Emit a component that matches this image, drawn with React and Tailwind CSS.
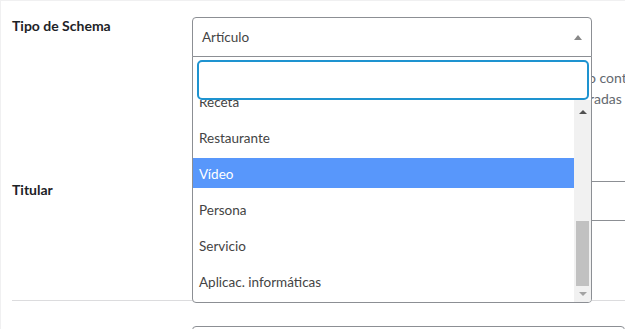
import React from 'react';

const options = ['Receta', 'Restaurante', 'Vídeo', 'Persona', 'Servicio', 'Aplicac. informáticas'];

export default function App() {
  const active = 'Vídeo';

  return (
    <div className="w-[625px] h-[329px] overflow-hidden bg-white border-t border-l border-[#f0f0f1] font-['Lato',sans-serif] text-[14px] text-[#1d2327]">
      <div className="pl-[11px] pt-[16px]">
        {/* Tipo de Schema */}
        <div className="flex">
          <label className="w-[180px] shrink-0 font-bold leading-[16px] pt-[1px]">Tipo de Schema</label>
          <div className="relative flex-1 min-w-0">
            <div className="w-[400px] h-[40px] flex items-center justify-between pl-[9px] pr-[7px] pt-[1px] border border-[#8c8f94] rounded-t-[4px] text-[#444] text-[13.5px]">
              <span>Artículo</span>
              <span className="w-0 h-0 border-x-[4px] border-x-transparent border-b-[5px] border-b-[#888] mr-[2px]"></span>
            </div>
            <div className="mt-[10px] text-[#646970] leading-[21px] whitespace-nowrap">
              <p><span className="inline-block w-[396px] overflow-hidden align-bottom">Selecciona el tipo de schema que mejor describa tu tip</span>o contenido principal</p>
              <p><span className="inline-block w-[397px] overflow-hidden align-bottom">Las propiedades se rellenan con las opciones configu</span>radas</p>
            </div>

            {/* dropdown */}
            <div className="absolute left-0 top-[39px] w-[400px] bg-white border border-[#8c8f94] rounded-b-[4px] overflow-hidden z-10">
              <div className="pt-[3px] pl-[4px] pr-[2px]">
                <div className="h-[40px] border-2 border-[#1e93d0] rounded-[5px] bg-white"></div>
              </div>
              <div className="flex h-[202px] overflow-hidden">
                <ul className="flex-1 flex flex-col gap-[6px] mt-[-14px] text-[#444] text-[13.5px]">
                  {options.map(opt => (
                    <li
                      key={opt}
                      className={
                        opt === active
                          ? 'h-[30px] shrink-0 flex items-center px-[6px] pt-[2px] bg-[#5897fb] text-white'
                          : 'h-[30px] shrink-0 flex items-center px-[6px] pt-[2px]'
                      }
                    >
                      {opt}
                    </li>
                  ))}
                </ul>
                <div className="w-[17px] shrink-0 bg-[#f1f1f1] flex flex-col items-center pt-[10px] pb-[6px]">
                  <span className="w-0 h-0 border-x-[4px] border-x-transparent border-b-[4px] border-b-[#505050]"></span>
                  <div className="flex-1"></div>
                  <div className="w-[13px] h-[65px] bg-[#c1c1c1] mb-[6px]"></div>
                  <span className="w-0 h-0 border-x-[4px] border-x-transparent border-t-[4px] border-t-[#a3a3a3]"></span>
                </div>
              </div>
            </div>
          </div>
        </div>

        {/* Titular */}
        <div className="flex mt-[72px]">
          <label className="w-[180px] shrink-0 font-bold leading-[16px] pt-[1px]">Titular</label>
          <div className="flex-1 min-w-0">
            <div className="w-[600px] h-[40px] border border-[#8c8f94] rounded-[4px]"></div>
          </div>
        </div>

        <div className="mt-[79px] border-t border-[#dcdcde]"></div>

        <div className="flex mt-[25px]">
          <div className="w-[180px] shrink-0"></div>
          <div className="w-[600px] h-[40px] border border-[#8c8f94] rounded-[4px]"></div>
        </div>
      </div>
    </div>
  );
}
